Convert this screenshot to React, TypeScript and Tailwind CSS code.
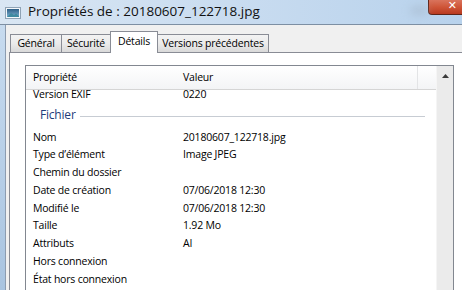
import React from "react";

const rows: [string, string][] = [
  ["Nom", "20180607_122718.jpg"],
  ["Type d\u2019élément", "Image JPEG"],
  ["Chemin du dossier", ""],
  ["Date de création", "07/06/2018 12:30"],
  ["Modifié le", "07/06/2018 12:30"],
  ["Taille", "1.92 Mo"],
  ["Attributs", "AI"],
  ["Hors connexion", ""],
  ["État hors connexion", ""],
];

function TitleIcon() {
  return (
    <svg width="16" height="12" viewBox="0 0 16 12" className="shrink-0">
      <defs>
        <linearGradient id="sky" x1="0" y1="0" x2="0" y2="1">
          <stop offset="0" stopColor="#2d5f86" />
          <stop offset="1" stopColor="#7fb2d3" />
        </linearGradient>
      </defs>
      <rect x="0.5" y="0.5" width="15" height="11" fill="#f4f7fa" stroke="#8fa3b5" />
      <rect x="2" y="2" width="12" height="8" fill="url(#sky)" />
      <path d="M2 10 L6 6 L9 8 L11 6.5 L14 9 L14 10 Z" fill="#3f8aa0" />
    </svg>
  );
}

function Tab({ label, width, selected }: { label: string; width: string; selected?: boolean }) {
  if (selected) {
    return (
      <div
        className={`${width} h-[22px] -mb-px z-10 relative bg-white border border-b-0 border-[#898c95] flex items-start justify-center pt-[4px] whitespace-nowrap`}
      >
        {label}
      </div>
    );
  }
  return (
    <div
      className={`${width} h-[18px] border border-b-0 border-[#898c95] bg-gradient-to-b from-[#f3f3f3] via-[#ebebeb] to-[#d9d9d9] flex items-center justify-center whitespace-nowrap`}
    >
      {label}
    </div>
  );
}

export default function App() {
  return (
    <div className="w-[462px] h-[290px] overflow-hidden flex flex-col bg-[#c6daef] font-['Open_Sans',sans-serif] text-[10.5px] tracking-[-0.2px] text-black leading-none">
      {/* Title bar */}
      <div className="h-[24px] shrink-0 flex bg-gradient-to-r from-[#d9e6f3] via-[#c9dcf0] to-[#b8d2ec]">
        <div className="ml-[5px] mt-[7px]">
          <TitleIcon />
        </div>
        <div className="ml-[7px] mt-[5px] text-[13.5px] tracking-normal text-[#111] whitespace-nowrap">
          Propriétés de : 20180607_122718.jpg
        </div>
        <div className="ml-[150px] mt-[6px] w-[50px] h-[9px] rounded-full bg-[#a3b4c6] opacity-50 blur-[4px]" />
        <div className="ml-auto w-[34px] h-[15px] shrink-0 rounded-bl-[4px] border-l border-b border-[#5e2418] bg-gradient-to-b from-[#d9735c] via-[#cf5538] to-[#b93a20] flex items-start justify-end pr-[5px]">
          <span className="text-white font-['DejaVu_Sans',sans-serif] font-bold text-[11px] leading-[11px] tracking-normal">
            ✕
          </span>
        </div>
      </div>
      <div className="h-px shrink-0 bg-[#7d8fa3]" />
      {/* Body */}
      <div className="flex-1 flex min-h-0">
        <div className="w-[5px] shrink-0 bg-gradient-to-b from-[#c7dbef] to-[#a9c4e0]" />
        <div className="w-px shrink-0 bg-[#8c9cb0]" />
        <div className="flex-1 bg-[#f0f0f0] pl-[3px] pt-[6px] flex flex-col min-h-0">
          {/* Tabs */}
          <div className="flex items-end h-[21px] pl-[1px] shrink-0">
            <Tab label="Général" width="w-[52px]" />
            <div className="-ml-px">
              <Tab label="Sécurité" width="w-[50px]" />
            </div>
            <div className="-ml-px z-10">
              <Tab label="Détails" width="w-[48px]" selected />
            </div>
            <div className="-ml-px">
              <Tab label="Versions précédentes" width="w-[112px]" />
            </div>
          </div>
          {/* Panel */}
          <div className="flex-1 bg-white border border-[#898c95] border-r-0 border-b-0 -mr-[10px] pl-[15px] pt-[12px] min-h-0 overflow-hidden">
            <div className="w-[429px] h-[240px] border border-[#828790] flex">
              <div className="flex-1 flex flex-col min-w-0">
                {/* Header */}
                <div className="h-[24px] shrink-0 flex items-center border-b border-[#d5d5d5] bg-gradient-to-b from-white to-[#f3f4f6]">
                  <div className="w-[157px] pl-[7px]">Propriété</div>
                  <div className="flex-1">Valeur</div>
                  <div className="w-px h-full bg-[#e3e4e6] mr-[18px]" />
                </div>
                {/* Rows */}
                <div className="flex-1 overflow-hidden">
                  <div className="-mt-[5px]">
                    <div className="h-[17.75px] flex items-center">
                      <div className="w-[157px] pl-[7px]">Version EXIF</div>
                      <div>0220</div>
                    </div>
                    <div className="h-[25.25px] flex items-center pl-[14px] pr-[11px]">
                      <span className="text-[#1e3c7a] text-[12px]">Fichier</span>
                      <div className="flex-1 h-px bg-[#c7ccd3] ml-[4px] mt-[2px]" />
                    </div>
                    {rows.map(([k, v]) => (
                      <div key={k} className="h-[17.75px] flex items-center">
                        <div className="w-[157px] pl-[7px]">{k}</div>
                        <div>{v}</div>
                      </div>
                    ))}
                  </div>
                </div>
              </div>
              {/* Scrollbar */}
              <div className="w-[17px] shrink-0 bg-[#ebebeb] border-l border-[#f5f5f5] flex flex-col items-center">
                <svg width="7" height="4" viewBox="0 0 7 4" className="mt-[8px]">
                  <path d="M0 4 L3.5 0 L7 4 Z" fill="#3a3a3a" />
                </svg>
              </div>
            </div>
          </div>
        </div>
      </div>
    </div>
  );
}
